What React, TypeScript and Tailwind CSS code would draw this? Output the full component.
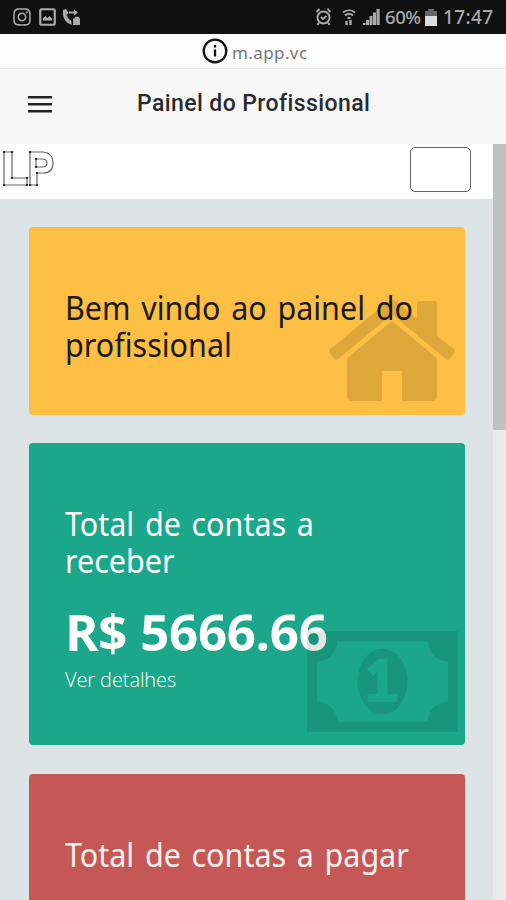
import React from 'react';
import { FaInstagram } from 'react-icons/fa';

const StatusBar: React.FC = () => (
  <header className="flex h-[34px] shrink-0 items-center justify-between bg-[#101010] pl-3 pr-[12px] text-[#aaa]">
    <div className="flex items-center">
      <FaInstagram size={20} />
      <svg className="ml-[7px]" width="17" height="18" viewBox="0 0 17 18">
        <rect x="1.250" y="1.250" width="14.500" height="15.500" rx="1.500" fill="none" stroke="currentColor" strokeWidth="2.200" />
        <path d="M4 12.500V10l2.500-2 2 2 2-2 2.500 2.500v2z" fill="currentColor" />
      </svg>
      <svg className="ml-[6px]" width="20" height="19" viewBox="0 0 20 19" fill="currentColor">
        <path d="M1 2l3-1 2.500 4-2 2q1.500 4 5 6v4Q2 14 1 7z" />
        <path d="M7 3.500h5V1.500l4 3-4 3v-2H7z" />
        <path d="M11 10.500h1.500a2.500 2 0 0 1 5 0H18V17h-7z" />
      </svg>
    </div>
    <div className="flex items-center">
      <svg width="17" height="18" viewBox="0 0 16 18" fill="none" stroke="currentColor" strokeWidth="1.900">
        <circle cx="8" cy="9.500" r="6" />
        <path d="M5.500 9l2 2 3.500-3M1 4l3-3M15 4l-3-3M3.500 14.500L2 17M12.500 14.500L14 17" />
      </svg>
      <svg className="ml-[10px]" width="14" height="17" viewBox="0 0 14 17" fill="none" stroke="currentColor" strokeWidth="1.700">
        <path d="M1 3.500q6-4.500 12 0M3 6.500q4-3.500 8 0M5.500 9.500q1.500-1.500 3 0" />
        <path d="M4.500 12v4M8.500 11v5" strokeWidth="2.400" />
      </svg>
      <svg className="ml-[7px]" width="17" height="18" viewBox="0 0 17 18" fill="currentColor">
        <path d="M0 15h2.500v2H0zM3 12h3v5H3zM6.500 8h3v9h-3zM10 4.500h3V17h-3zM13.500 1h3.200v16h-3.200z" />
      </svg>
      <span className="ml-[5px] w-[37px] whitespace-nowrap font-['Noto_Sans'] text-[18.500px] font-medium leading-none tracking-[-0.4px]">60%</span>
      <svg className="ml-[3px]" width="12" height="17" viewBox="0 0 12 17">
        <path d="M3 0h6v2h3v6H0V2h3z" fill="#666" />
        <path d="M0 7h12v10H0z" fill="#ddd" />
      </svg>
      <span className="ml-[6px] w-[51px] whitespace-nowrap font-['Noto_Sans'] text-[19px] font-medium leading-none tracking-[0.4px]">17:47</span>
    </div>
  </header>
);

const AddressBar: React.FC = () => (
  <div className="flex h-[35px] shrink-0 items-center border-b border-[#e8e8e8] bg-[#fcfcfc] pl-[202px]">
    <svg width="26" height="26" viewBox="0 0 26 26" fill="none" stroke="#111" strokeWidth="2.300">
      <circle cx="13" cy="13" r="11.300" />
      <path d="M13 11.500v7M13 7v2.500" />
    </svg>
    <span className="ml-[4px] mt-[3px] font-['Noto_Sans'] text-[17px] tracking-[0.4px] text-[#777]">m.app.vc</span>
  </div>
);

const Logo: React.FC = () => (
  <svg className="mt-[5px]" width="52" height="36" viewBox="0 0 52 36" fill="none" stroke="#666" strokeWidth="1.200">
    <path d="M1 1h8v26h15v7H1zM27 1h13q10 1 10 11t-10 10h-6v12h-7zM33 8h6q5 0 5 4t-5 4h-6z" />
    <path
      d="M1 1h0M9 1h0M9 27h0M24 27h0M24 34h0M1 34h0M27 1h0M27 34h0M34 34h0M34 22h0M33 8h0M33 16h0"
      stroke="#333"
      strokeWidth="2.200"
      strokeLinecap="square"
    />
  </svg>
);

const HomeIcon: React.FC = () => (
  <svg className="h-[100px] w-[126px]" viewBox="25 256 1614 1280" fill="currentColor">
    <path d="M1408 992v480q0 26-19 45t-45 19h-384v-384h-256v384h-384q-26 0-45-19t-19-45v-480q0-1 .5-3t.5-3l575-474 575 474q1 2 1 6zm223-69l-62 74q-8 9-21 11h-3q-13 0-21-7l-692-577-692 577q-12 8-24 7-13-2-21-11l-62-74q-8-10-7-23.500t11-21.500l719-599q32-26 76-26t76 26l244 204v-195q0-14 9-23t23-9h192q14 0 23 9t9 23v408l219 182q10 8 11 21.500t-7 23.500z" />
  </svg>
);

const MoneyIcon: React.FC = () => (
  <svg className="h-[101px] w-[151px]" viewBox="0 256 1920 1280" fill="currentColor" fillRule="evenodd">
    <path d="M768 1152h384v-96h-128v-448h-114l-148 137 77 80q42-37 55-57h2v288h-128v96zm512-256q0 70-21 142t-59.500 134-101.500 101-138 39-138-39-101.500-101-59.500-134-21-142 21-142 59.500-134 101.500-101 138-39 138 39 101.500 101 59.500 134 21 142zm512 256v-512q-106 0-181-75t-75-181h-1152q0 106-75 181t-181 75v512q106 0 181 75t75 181h1152q0-106 75-181t181-75zM1920 256v1280H0V256z" />
  </svg>
);

interface CardTitleProps {
  children: React.ReactNode;
}

const CardTitle: React.FC<CardTitleProps> = ({ children }) => (
  <h2 className="origin-left scale-x-[0.91] whitespace-nowrap font-['Noto_Sans',sans-serif] text-[33.500px] leading-[37px] [word-spacing:3px]">
    {children}
  </h2>
);

const App: React.FC = () => (
  <div className="flex h-[900px] w-[506px] flex-col overflow-hidden bg-white font-['Open_Sans',sans-serif]">
    <StatusBar />
    <AddressBar />
    <nav className="flex h-[75px] shrink-0 items-center bg-[#f7f7f7] pb-1 pl-[28px]">
      <svg width="24" height="17" viewBox="0 0 24 17" fill="#222">
        <path d="M0 0h24v2.500H0zM0 7h24v2.500H0zM0 14h24v2.500H0z" />
      </svg>
      <h1 className="ml-[85px] whitespace-nowrap font-[Roboto] text-[23px] font-medium tracking-[0.4px] text-[#2a2a2a]">Painel do Profissional</h1>
    </nav>
    <div className="flex min-h-0 flex-1">
      <main className="flex w-[493px] shrink-0 flex-col bg-[#dce4e7]">
        <div className="flex h-[55px] shrink-0 items-start justify-between bg-white pl-[3px] pr-[22px] pt-[2px]">
          <Logo />
          <button className="mt-[1px] h-[45px] w-[61px] rounded-[5px] border border-[#666]" aria-label="Menu" />
        </div>
        <div className="flex flex-col gap-[28px] pl-[29px] pr-[28px] pt-[28px]">
          <section className="relative h-[188px] shrink-0 rounded-[4px] bg-[#fdbf43] pl-[36px] pt-[62px] text-[#1c1a10]">
            <CardTitle>Bem vindo ao painel do<br />profissional</CardTitle>
            <div className="absolute bottom-[14px] right-[10px] text-black/12">
              <HomeIcon />
            </div>
          </section>
          <section className="relative h-[302px] shrink-0 rounded-[4px] bg-[#1aa78a] pl-[36px] pt-[62px] text-white">
            <CardTitle>Total de contas a<br />receber</CardTitle>
            <p className="mt-[17px] whitespace-nowrap text-[51px] font-bold leading-[70px] tracking-[-0.3px]">R$ 5666.66</p>
            <a className="mt-[1px] block text-[20px] font-light leading-[26px] tracking-[-0.1px]">Ver detalhes</a>
            <div className="absolute bottom-[13px] right-[7px] text-black/10">
              <MoneyIcon />
            </div>
          </section>
          <section className="mt-px h-[302px] shrink-0 rounded-[4px] bg-[#c55755] pl-[36px] pt-[62px] text-[#fff1ee]">
            <CardTitle>Total de contas a pagar</CardTitle>
          </section>
        </div>
      </main>
      <div className="flex-1 bg-[#ebebeb]">
        <div className="h-[286px] bg-[#c1c1c1]" />
      </div>
    </div>
  </div>
);

export default App;
